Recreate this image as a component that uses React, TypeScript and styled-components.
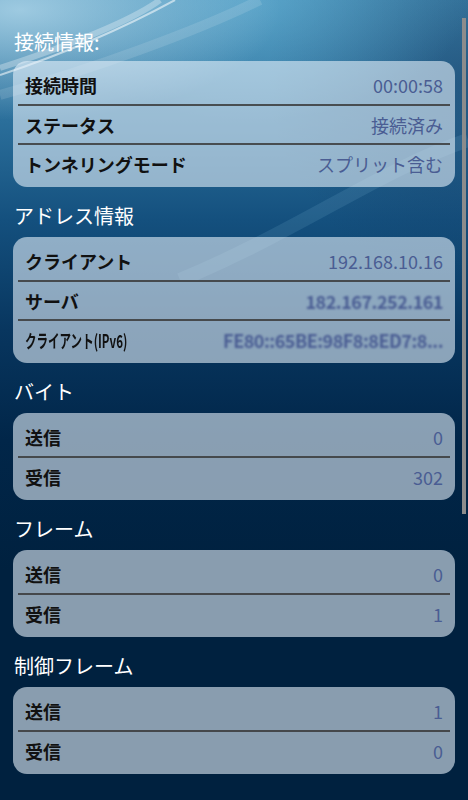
import React from "react";
import styled, { createGlobalStyle } from "styled-components";

const Global = createGlobalStyle`
  html, body { margin: 0; padding: 0; background: #00213f; }
  body { font-family: "Noto Sans CJK JP", "Noto Sans", sans-serif; }
`;

const Screen = styled.div`
  position: relative;
  width: 468px;
  min-height: 800px;
  overflow: hidden;
  box-sizing: border-box;
  padding: 21px 13px 20px 13px;
  background:
    radial-gradient(ellipse 260px 110px at 20px 10px, rgba(190, 225, 242, 0.75), rgba(190, 225, 242, 0) 100%),
    radial-gradient(ellipse 220px 120px at 250px 0px, rgba(110, 185, 220, 0.55), rgba(110, 185, 220, 0) 100%),
    radial-gradient(ellipse 200px 200px at 468px 80px, rgba(20, 50, 90, 0.45), rgba(20, 50, 90, 0) 100%),
    linear-gradient(180deg, #3f88b0 0px, #2b6f9b 120px, #14507e 220px, #08365f 330px, #012649 440px, #00213f 570px, #00213f 800px);
`;

const Swoosh = styled.svg`
  position: absolute;
  left: 0;
  top: 0;
  width: 468px;
  height: 280px;
  pointer-events: none;
`;

const Content = styled.div`
  position: relative;
`;

const SectionTitle = styled.div<{ $first?: boolean }>`
  color: #ffffff;
  font-size: 20px;
  line-height: 24px;
  height: 24px;
  padding: ${(p) => (p.$first ? "9px 0 7px 1px" : "17px 0 9px 1px")};
  font-weight: 400;
  white-space: nowrap;
`;

const Card = styled.div`
  background: rgba(228, 240, 250, 0.6);
  border-radius: 14px;
  padding: 4px 0 5px 0;
`;

const Row = styled.div<{ $divider?: boolean }>`
  height: 39px;
  box-sizing: border-box;
  margin: 0 5px;
  padding: 0 7px;
  display: flex;
  align-items: center;
  justify-content: space-between;
  border-top: ${(p) => (p.$divider ? "2px solid rgba(58, 58, 58, 0.85)" : "none")};
`;

const Label = styled.span<{ $condensed?: boolean }>`
  color: #111111;
  font-size: 18px;
  font-weight: 700;
  white-space: nowrap;
  display: inline-block;
  transform-origin: left center;
  transform: ${(p) => (p.$condensed ? "scaleX(0.64)" : "none")};
`;

const Value = styled.span<{ $blur?: boolean }>`
  color: #4a5d93;
  font-size: 18px;
  white-space: nowrap;
  filter: ${(p) => (p.$blur ? "blur(1.3px)" : "none")};
  letter-spacing: ${(p) => (p.$blur ? "-0.5px" : "0")};
  font-weight: ${(p) => (p.$blur ? 700 : 400)};
`;

const ScrollBar = styled.div`
  position: absolute;
  left: 462px;
  top: 18px;
  width: 4px;
  height: 496px;
  background: #8c8c8c;
`;

type Item = { label: string; value: string; condensed?: boolean; blur?: boolean };
type Section = { title: string; items: Item[] };

const sections: Section[] = [
  {
    title: "接続情報:",
    items: [
      { label: "接続時間", value: "00:00:58" },
      { label: "ステータス", value: "接続済み" },
      { label: "トンネリングモード", value: "スプリット含む" },
    ],
  },
  {
    title: "アドレス情報",
    items: [
      { label: "クライアント", value: "192.168.10.16" },
      { label: "サーバ", value: "182.167.252.161", blur: true },
      { label: "クライアント(IPv6)", value: "FE80::65BE:98F8:8ED7:8...", condensed: true, blur: true },
    ],
  },
  {
    title: "バイト",
    items: [
      { label: "送信", value: "0" },
      { label: "受信", value: "302" },
    ],
  },
  {
    title: "フレーム",
    items: [
      { label: "送信", value: "0" },
      { label: "受信", value: "1" },
    ],
  },
  {
    title: "制御フレーム",
    items: [
      { label: "送信", value: "1" },
      { label: "受信", value: "0" },
    ],
  },
];

export default function App() {
  return (
    <>
      <Global />
      <Screen>
        <Swoosh viewBox="0 0 468 280">
          <path d="M0 75 C 60 55, 120 30, 175 0" stroke="rgba(255,255,255,0.55)" strokeWidth="2" fill="none" />
          <path d="M0 68 C 70 45, 130 22, 160 0" stroke="rgba(255,255,255,0.3)" strokeWidth="6" fill="none" />
          <path d="M0 95 C 90 70, 200 30, 260 0" stroke="rgba(255,255,255,0.12)" strokeWidth="10" fill="none" />
          <path d="M180 280 C 300 230, 380 170, 468 140" stroke="rgba(160,210,235,0.12)" strokeWidth="14" fill="none" />
        </Swoosh>
        <Content>
          {sections.map((s, si) => (
            <div key={s.title}>
              <SectionTitle $first={si === 0}>{s.title}</SectionTitle>
              <Card>
                {s.items.map((it, i) => (
                  <Row key={it.label} $divider={i > 0}>
                    <Label $condensed={it.condensed}>{it.label}</Label>
                    <Value $blur={it.blur}>{it.value}</Value>
                  </Row>
                ))}
              </Card>
            </div>
          ))}
        </Content>
        <ScrollBar />
      </Screen>
    </>
  );
}
